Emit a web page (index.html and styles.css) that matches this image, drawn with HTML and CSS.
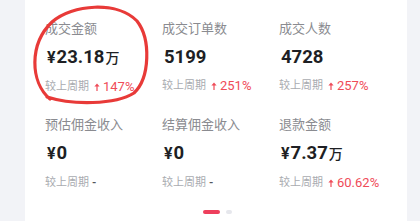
FILE: index.html
```html
<!DOCTYPE html>
<html lang="zh-CN">
<head>
<meta charset="utf-8">
<link rel="stylesheet" href="styles.css">
</head>
<body>
<div class="page">
  <div class="card">
    <div class="grid">
      <div class="cell">
        <div class="label">成交金额</div>
        <div class="value"><span class="cur">¥</span>23.18<span class="unit">万</span></div>
        <div class="cmp">较上周期<span class="up"><svg class="arrow" viewBox="0 0 6 8"><path d="M3 8V2" stroke="#ef4b58" stroke-width="1.2"/><path d="M0.4 3.6L3 0.6l2.6 3z" fill="#ef4b58"/></svg>147%</span></div>
      </div>
      <div class="cell">
        <div class="label">成交订单数</div>
        <div class="value">5199</div>
        <div class="cmp">较上周期<span class="up"><svg class="arrow" viewBox="0 0 6 8"><path d="M3 8V2" stroke="#ef4b58" stroke-width="1.2"/><path d="M0.4 3.6L3 0.6l2.6 3z" fill="#ef4b58"/></svg>251%</span></div>
      </div>
      <div class="cell">
        <div class="label">成交人数</div>
        <div class="value">4728</div>
        <div class="cmp">较上周期<span class="up"><svg class="arrow" viewBox="0 0 6 8"><path d="M3 8V2" stroke="#ef4b58" stroke-width="1.2"/><path d="M0.4 3.6L3 0.6l2.6 3z" fill="#ef4b58"/></svg>257%</span></div>
      </div>
      <div class="cell">
        <div class="label">预估佣金收入</div>
        <div class="value"><span class="cur">¥</span>0</div>
        <div class="cmp">较上周期<span class="dash">-</span></div>
      </div>
      <div class="cell">
        <div class="label">结算佣金收入</div>
        <div class="value"><span class="cur">¥</span>0</div>
        <div class="cmp">较上周期<span class="dash">-</span></div>
      </div>
      <div class="cell">
        <div class="label">退款金额</div>
        <div class="value"><span class="cur">¥</span>7.37<span class="unit">万</span></div>
        <div class="cmp">较上周期<span class="up"><svg class="arrow" viewBox="0 0 6 8"><path d="M3 8V2" stroke="#ef4b58" stroke-width="1.2"/><path d="M0.4 3.6L3 0.6l2.6 3z" fill="#ef4b58"/></svg>60.62%</span></div>
      </div>
    </div>
    <div class="dots">
      <span class="dot active"></span>
      <span class="dot"></span>
    </div>
    <svg class="ring" viewBox="0 0 160 110" width="160" height="110">
      <path d="M50 99 C30 82 29 44 52 22 C72 4 118 1 137 21 C151 39 150 78 134 93 C115 105 72 105 47 97" fill="none" stroke="#e83a38" stroke-width="3.2" stroke-linecap="round"/>
    </svg>
  </div>
</div>
</body>
</html>
```
FILE: styles.css
```css
html, body {
  margin: 0;
  padding: 0;
}
body {
  width: 420px;
  height: 221px;
  overflow: hidden;
  background: #f2f3f7;
  font-family: Roboto, "Noto Sans CJK SC", sans-serif;
}
.page {
  display: flex;
  height: 221px;
}
.card {
  position: relative;
  margin-left: 25px;
  width: 382px;
  height: 221px;
  background: #ffffff;
  box-sizing: border-box;
  padding: 20px 0 0 20px;
}
.grid {
  display: grid;
  grid-template-columns: 117px 117px 117px;
  row-gap: 21px;
}
.cell {
  display: flex;
  flex-direction: column;
}
.label {
  font-size: 13px;
  line-height: 18px;
  color: #8a8b90;
  white-space: nowrap;
}
.value {
  margin-top: 7px;
  font-size: 18.5px;
  line-height: 24px;
  font-weight: 700;
  color: #1e1f24;
  white-space: nowrap;
  margin-left: 2px;
}
.cur {
  font-size: 16px;
  margin-right: 1px;
}
.unit {
  font-size: 14px;
  font-weight: 500;
  margin-left: 1px;
}
.cmp {
  margin-top: 9px;
  font-size: 11px;
  line-height: 16px;
  color: #a9abb0;
  white-space: nowrap;
  display: flex;
  align-items: center;
}
.up {
  display: inline-flex;
  align-items: center;
  margin-left: 5px;
  color: #ef4b58;
  font-size: 13px;
}
.arrow {
  width: 6px;
  height: 8px;
  margin-right: 3px;
}
.dash {
  margin-left: 3px;
  color: #55565c;
  font-weight: 700;
}
.dots {
  display: flex;
  justify-content: center;
  align-items: center;
  gap: 6px;
  margin-top: 19px;
  padding-right: 18px;
}
.dot {
  width: 6px;
  height: 4px;
  border-radius: 2px;
  background: #e6e7ec;
}
.dot.active {
  width: 17px;
  background: #ee3f5c;
}
.ring {
  position: absolute;
  left: -25px;
  top: 0;
}
```
